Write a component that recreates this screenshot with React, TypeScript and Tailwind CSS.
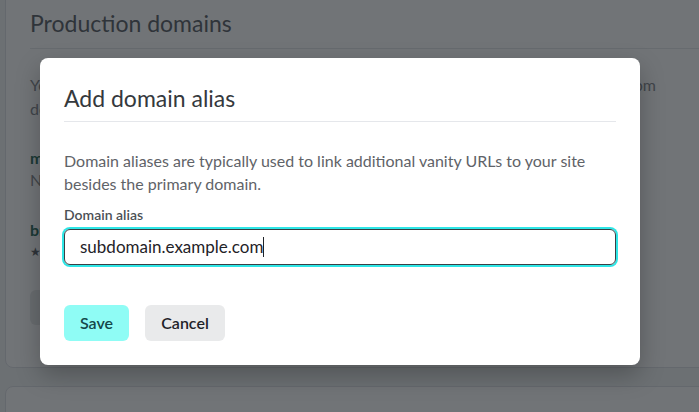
import React from "react";

export default function App() {
  const font = { fontFamily: "Lato, 'Noto Sans', sans-serif" };
  return (
    <div className="relative w-[699px] h-[412px] overflow-hidden bg-[#f3f4f6]" style={font}>
      {/* Underlying page */}
      <div className="w-[740px] pl-[5px] flex flex-col gap-[18px] -mt-[10px]">
        <div className="h-[378px] rounded-lg border border-[#dfe2e6] bg-white pl-[24px] pt-[16px]">
          <div className="text-[23px] leading-[32px] text-[#5b6066] pb-[9px] border-b border-[#e6e8eb]">Production domains</div>
          <div className="pt-[24px] text-[16px] leading-[24px] text-[#868a8f] whitespace-nowrap">
            <div>Your site is always accessible at its own subdomain. Add a custom domain to serve it from</div>
            <div>domain name you own.</div>
          </div>
          <div className="pt-[26px] text-[16px] leading-[22px] whitespace-nowrap">
            <div className="font-bold text-[#2b6d5e]">my-site.example.com</div>
            <div className="text-[#868a8f]">Netlify subdomain</div>
          </div>
          <div className="pt-[28px] text-[16px] leading-[22px] whitespace-nowrap">
            <div className="font-bold text-[#2b6d5e]">brand.example.com</div>
            <div className="text-[#5b6066] text-[12px]">★ Primary domain</div>
          </div>
          <div className="pt-[27px] flex gap-4">
            <div className="h-[35px] w-[140px] rounded-md bg-[#e9eaeb]" />
          </div>
        </div>
        <div className="h-[80px] rounded-lg border border-[#dfe2e6] bg-white" />
      </div>

      {/* Overlay */}
      <div className="absolute inset-0 bg-[#12171c]/60" />

      {/* Modal */}
      <div className="absolute left-[40px] top-[58px] w-[600px] rounded-lg bg-white px-6 pt-[26px] pb-6 shadow-[0_10px_25px_rgba(0,0,0,0.25)]">
        <div className="text-[23px] leading-[28px] text-[#35393d] pb-[9px] border-b border-[#e5e7eb]">Add domain alias</div>
        <p className="mt-[27px] text-[16px] leading-[23px] text-[#5f6368]">
          Domain aliases are typically used to link additional vanity URLs to your site
          <br />
          besides the primary domain.
        </p>
        <label className="block mt-[12px] text-[14px] leading-[16px] font-semibold text-[#4b5055]">Domain alias</label>
        <div className="mt-[6px] h-[36px] rounded-md border border-[#3a3f44] ring-2 ring-[#2ee6e6] flex items-center px-[15px] text-[17px] text-[#1f2328]">
          <span>subdomain.example.com</span>
          <span className="inline-block w-px h-[20px] bg-[#1f2328]" />
        </div>
        <div className="mt-[40px] flex gap-4">
          <button className="h-[36px] w-[65px] rounded-md bg-[#8ffcf5] text-[16px] font-semibold text-[#14474a]">Save</button>
          <button className="h-[36px] w-[80px] rounded-md bg-[#e9eaeb] text-[16px] font-semibold text-[#1f2328]">Cancel</button>
        </div>
      </div>
    </div>
  );
}
